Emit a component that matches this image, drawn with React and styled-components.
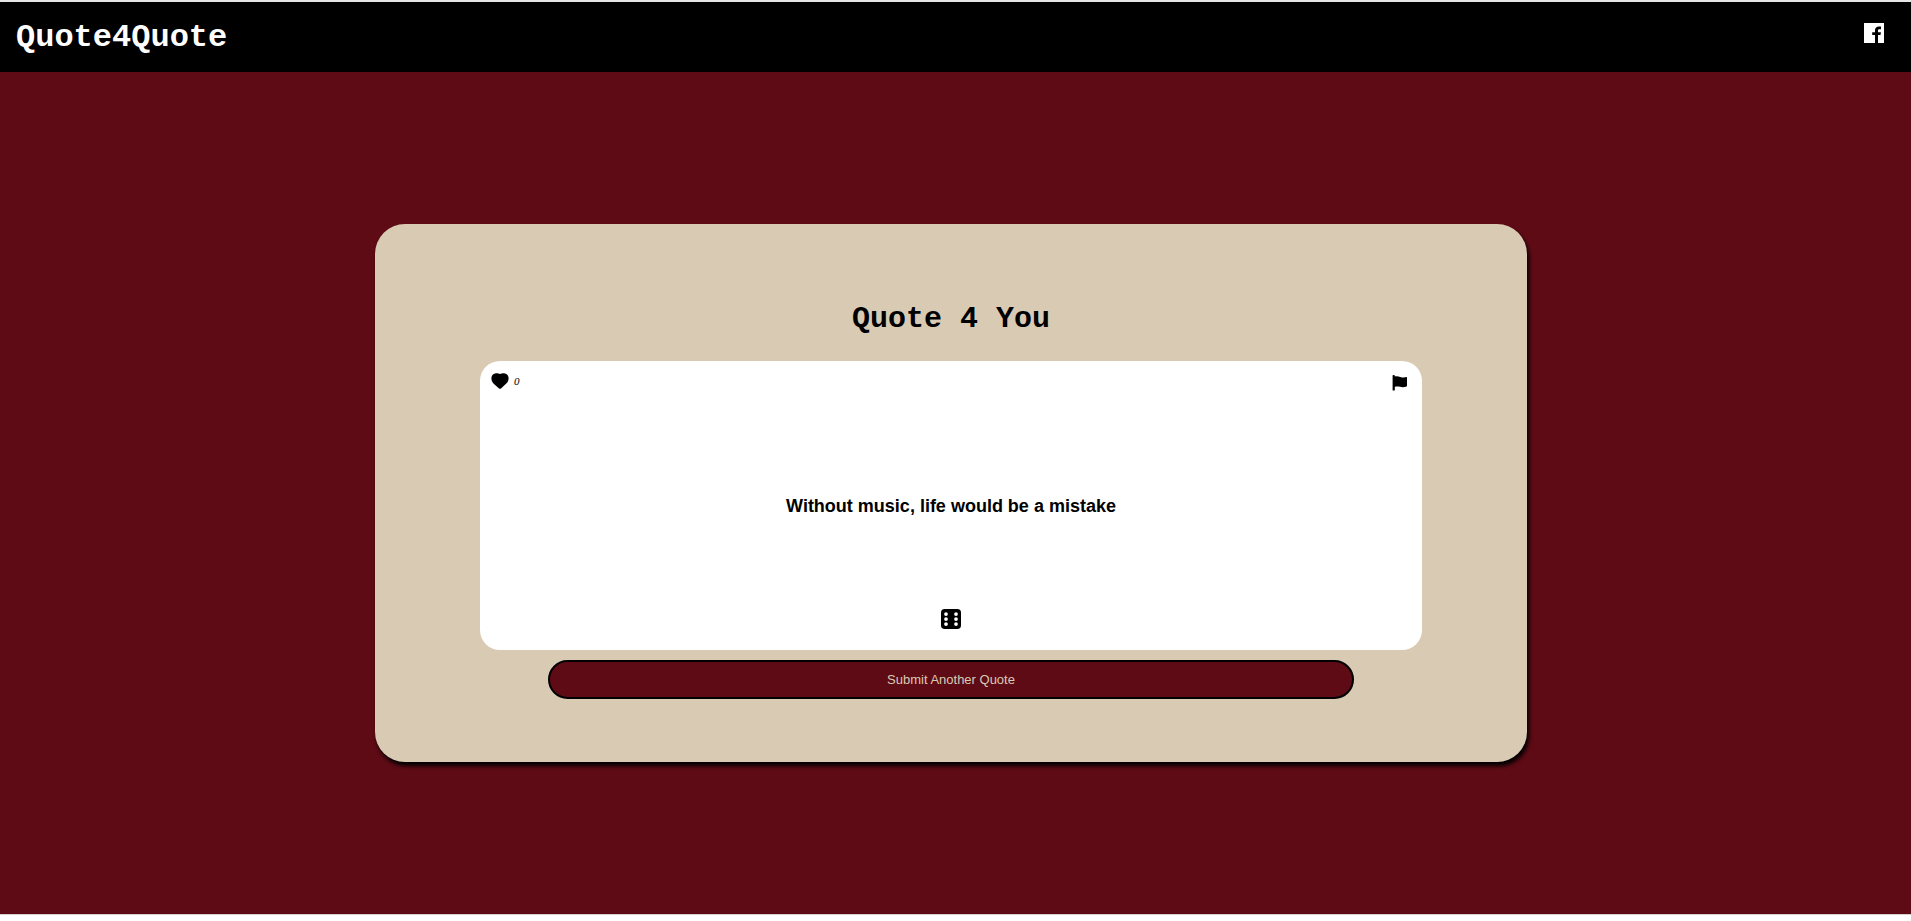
import React, { useState } from "react";
import styled, { createGlobalStyle } from "styled-components";
import { BsDice6Fill } from "react-icons/bs";

const GlobalStyle = createGlobalStyle`
  * { box-sizing: border-box; }
  body { margin: 0; background: #fff; }
`;

const Page = styled.div`
  display: flex;
  flex-direction: column;
  min-height: 100vh;
  padding-bottom: 6px;
  border-top: 2px solid #e4e6e8;
`;

const Header = styled.header`
  display: flex;
  align-items: center;
  justify-content: space-between;
  height: 70px;
  padding: 2px 27px 0 16px;
  background: #000;
`;

const Brand = styled.a`
  color: #fff;
  font: bold 32px/36px "Liberation Mono", "Courier New", monospace;
  text-decoration: none;
`;

const SocialLink = styled.a`
  display: flex;
  padding-bottom: 10px;
  color: #fff;
`;

const Main = styled.main`
  flex: 1;
  display: flex;
  align-items: center;
  justify-content: center;
  padding: 0 9px 0 0;
  background: #5e0b15;
  border-bottom: 1px solid #d8d0d0;
`;

const Panel = styled.section`
  display: flex;
  flex-direction: column;
  align-items: center;
  width: 90%;
  max-width: 1152px;
  padding: 77px 0 63px;
  border-radius: 30px;
  background: #d9cab3;
  box-shadow: 2px 4px 4px #000;
`;

const Title = styled.h1`
  margin: 0 0 24px;
  color: #000;
  font: bold 30px/36px "Liberation Mono", "Courier New", monospace;
`;

const QuoteCard = styled.article`
  display: flex;
  flex-direction: column;
  align-items: center;
  width: 82%;
  max-width: 942px;
  height: 289px;
  padding: 12px 14px 21px 11px;
  border-radius: 20px;
  background: #fff;
`;

const CardBar = styled.div`
  display: flex;
  align-items: flex-start;
  justify-content: space-between;
  width: 100%;
`;

const IconButton = styled.button`
  display: flex;
  align-items: center;
  gap: 5px;
  padding: 0;
  border: 0;
  background: none;
  color: #000;
  font: italic 11px/16px "Liberation Serif", serif;
  cursor: pointer;
`;

const FlagButton = styled(IconButton)`
  padding-top: 2px;
`;

const Quote = styled.blockquote`
  display: flex;
  flex: 1;
  align-items: center;
  margin: 0;
  padding: 12px 0 0 3px;
  color: #000;
  font: bold 18px/24px "Liberation Sans", Arial, sans-serif;
  text-align: center;
`;

const DiceButton = styled(IconButton)`
  margin-left: 3px;
`;

const SubmitButton = styled.button`
  width: 70%;
  height: 39px;
  margin-top: 10px;
  padding: 0 6px;
  border: 2px solid #000;
  border-radius: 20px;
  background: #5e0b15;
  color: #d9cab3;
  font: 13px/16px "Liberation Sans", Arial, sans-serif;
  cursor: pointer;
`;

const FacebookIcon = () => (
  <svg width="20" height="20" viewBox="0 0 20 20" fill="currentColor" aria-hidden="true">
    <path d="M0 0h20v20h-6v-8h2.500l.4-2.700H14V7.600c0-.9.4-1.400 1.500-1.400H17V3.600c-.5-.1-1.200-.2-2-.2-2.500 0-4 1.400-4 3.900v2H8.200V12H11v8H0z" />
  </svg>
);

const HeartIcon = () => (
  <svg width="18" height="16" viewBox="0 0 18 16" fill="currentColor" aria-hidden="true">
    <path d="M9 1C10.200.3 11.700.1 13 .2c2.700.1 4.600 2.300 4.600 5 0 2.100-.8 3.900-2.300 5.400L10 15.400c-.6.500-1.400.5-2 0l-5.300-4.700C1.200 9.200.4 7.400.4 5.300c0-2.700 1.900-4.900 4.600-5C6.300.1 7.800.3 9 1z" />
  </svg>
);

const FlagIcon = () => (
  <svg width="16" height="16" viewBox="0 0 16 16" fill="currentColor" aria-hidden="true">
    <path d="M.6.8c0-.4.3-.7.800-.7h.6c.5 0 .8.300.8.700v.7c1.900-.5 3.800-.1 5.500.5 2.200.7 4.200.6 6.700.1v9.200c-2.400 1-4.600 1.200-7 .5-1.800-.5-3.400-.6-5.200 0V15c0 .3-.2.600-.5.600h-1c-.4 0-.7-.3-.7-.6z" />
  </svg>
);

export default function App() {
  const [likes, setLikes] = useState(0);
  return (
    <>
      <GlobalStyle />
      <Page>
        <Header>
          <Brand href="#">Quote4Quote</Brand>
          <SocialLink href="#" aria-label="Facebook">
            <FacebookIcon />
          </SocialLink>
        </Header>
        <Main>
          <Panel>
            <Title>Quote 4 You</Title>
            <QuoteCard>
              <CardBar>
                <IconButton aria-label="Like" onClick={() => setLikes(likes + 1)}>
                  <HeartIcon />
                  {likes}
                </IconButton>
                <FlagButton aria-label="Report">
                  <FlagIcon />
                </FlagButton>
              </CardBar>
              <Quote>Without music, life would be a mistake</Quote>
              <DiceButton aria-label="Random quote">
                <BsDice6Fill size={20} />
              </DiceButton>
            </QuoteCard>
            <SubmitButton>Submit Another Quote</SubmitButton>
          </Panel>
        </Main>
      </Page>
    </>
  );
}
